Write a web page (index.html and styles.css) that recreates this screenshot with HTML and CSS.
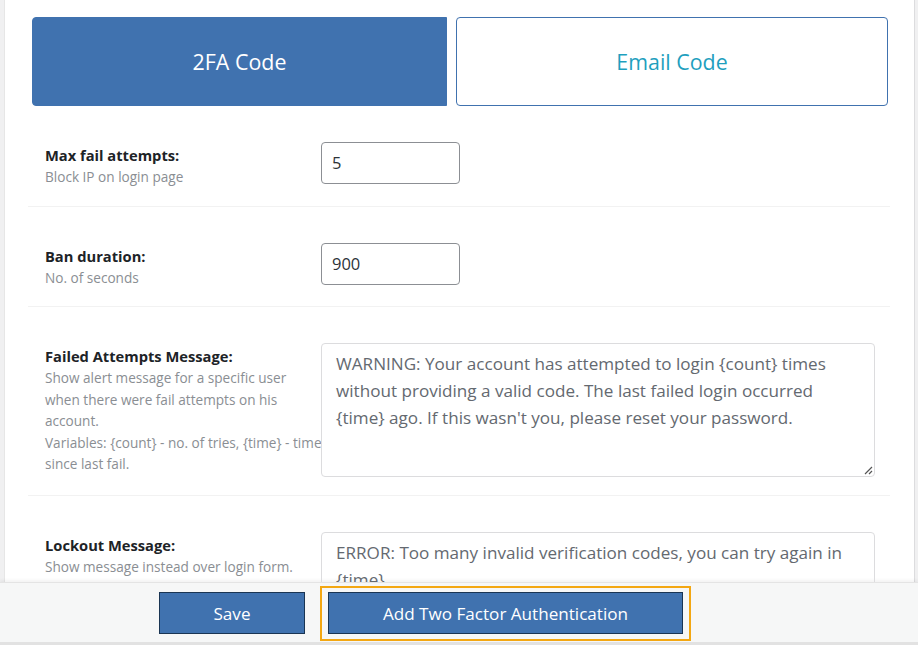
FILE: index.html
```html
<!DOCTYPE html>
<html lang="en">
<head>
<meta charset="utf-8">
<title>Two Factor Settings</title>
<link rel="stylesheet" href="styles.css">
</head>
<body>
<div class="page">
  <div class="main">
    <div class="tabs">
      <div class="tab tab-active">2FA Code</div>
      <div class="tab tab-idle">Email Code</div>
    </div>
    <div class="rows">
      <div class="row">
        <div class="row-label">
          <div class="label">Max fail attempts:</div>
          <div class="desc">Block IP on login page</div>
        </div>
        <div class="row-field">
          <div class="input">5</div>
        </div>
      </div>
      <div class="row">
        <div class="row-label">
          <div class="label">Ban duration:</div>
          <div class="desc">No. of seconds</div>
        </div>
        <div class="row-field">
          <div class="input">900</div>
        </div>
      </div>
      <div class="row">
        <div class="row-label">
          <div class="label">Failed Attempts Message:</div>
          <div class="desc nowrap">Show alert message for a specific user<br>when there were fail attempts on his<br>account.<br>Variables: {count} - no. of tries, {time} - time<br>since last fail.</div>
        </div>
        <div class="row-field">
          <div class="textarea tall">WARNING: Your account has attempted to login {count} times without providing a valid code. The last failed login occurred {time} ago. If this wasn't you, please reset your password.<svg class="grip" width="9" height="9" viewBox="0 0 9 9"><path d="M8 1 L1 8 M8 5 L5 8" stroke="#555" stroke-width="1.2" fill="none"/></svg></div>
        </div>
      </div>
      <div class="row">
        <div class="row-label">
          <div class="label">Lockout Message:</div>
          <div class="desc">Show message instead over login form.</div>
        </div>
        <div class="row-field">
          <div class="textarea">ERROR: Too many invalid verification codes, you can try again in {time}.</div>
        </div>
      </div>
    </div>
  </div>
  <div class="footer">
    <button class="btn btn-save">Save</button>
    <div class="focus-ring">
      <button class="btn btn-add">Add Two Factor Authentication</button>
    </div>
  </div>
</div>
</body>
</html>
```
FILE: styles.css
```css
* { box-sizing: border-box; }
html, body { margin: 0; padding: 0; }
body {
  background: #f0f0f1;
  font-family: "Open Sans", "Noto Sans", sans-serif;
  color: #1d2327;
}
.page {
  height: 645px;
  display: flex;
  flex-direction: column;
  overflow: hidden;
}
.main {
  flex: 1;
  min-height: 0;
  overflow: hidden;
  margin: 0 3px 0 4px;
  background: #fff;
  border-left: 1px solid #e6e6e6;
  border-right: 1px solid #dcdcde;
}
.tabs {
  display: flex;
  gap: 9px;
  padding: 17px 26px 0 27px;
}
.tab {
  height: 89px;
  display: flex;
  align-items: center;
  justify-content: center;
  font-size: 21.4px;
  border: 1px solid #4072af;
  border-radius: 4px;
}
.tab-active {
  width: 415px;
  background: #4072af;
  color: #fff;
  border-top-right-radius: 0;
  border-bottom-right-radius: 0;
}
.tab-idle {
  flex: 1;
  background: #fff;
  color: #1f9fbe;
}
.rows {
  margin: 0 24px 0 23px;
}
.row {
  display: flex;
  padding: 36px 0 18px;
  border-bottom: 1px solid #f2f2f2;
}
.row-label {
  width: 293px;
  padding: 3px 0 0 17px;
  flex-shrink: 0;
}
.label {
  font-size: 14.7px;
  font-weight: 700;
  line-height: 21px;
  color: #1d2327;
}
.desc {
  font-size: 13.6px;
  line-height: 21.5px;
  color: #8a8e93;
}
.nowrap { white-space: nowrap; }
.row-field {
  flex: 1;
  padding-right: 15px;
}
.input {
  width: 139px;
  height: 42px;
  border: 1px solid #8c8f94;
  border-radius: 4px;
  padding: 0 10px;
  font-size: 16.5px;
  line-height: 40px;
  color: #2c3338;
}
.textarea {
  position: relative;
  border: 1px solid #dcdcde;
  border-radius: 4px;
  padding: 6px 14px;
  font-size: 17.1px;
  line-height: 27px;
  color: #646970;
  min-height: 134px;
}
.textarea.tall { height: 134px; }
.grip {
  position: absolute;
  right: 1px;
  bottom: 1px;
}
.footer {
  height: 63px;
  flex-shrink: 0;
  background: #f6f7f7;
  border-top: 1px solid #e4e4e4;
  box-shadow: 0 -2px 3px rgba(0,0,0,0.05);
  border-bottom: 3px solid #e2e2e2;
  display: flex;
  align-items: flex-start;
  padding: 3px 0 0 159px;
}
.btn {
  height: 42px;
  background: #4072af;
  color: #fff;
  border: 1px solid #1a3553;
  border-radius: 0;
  font-family: inherit;
  font-size: 17.1px;
  padding: 0;
  cursor: pointer;
}
.btn-save {
  width: 146px;
  margin-top: 6px;
  margin-right: 15px;
}
.focus-ring {
  border: 2px solid #f3a712;
  padding: 4px 6px 5px 6px;
}
.btn-add {
  width: 355px;
  display: block;
}
```
